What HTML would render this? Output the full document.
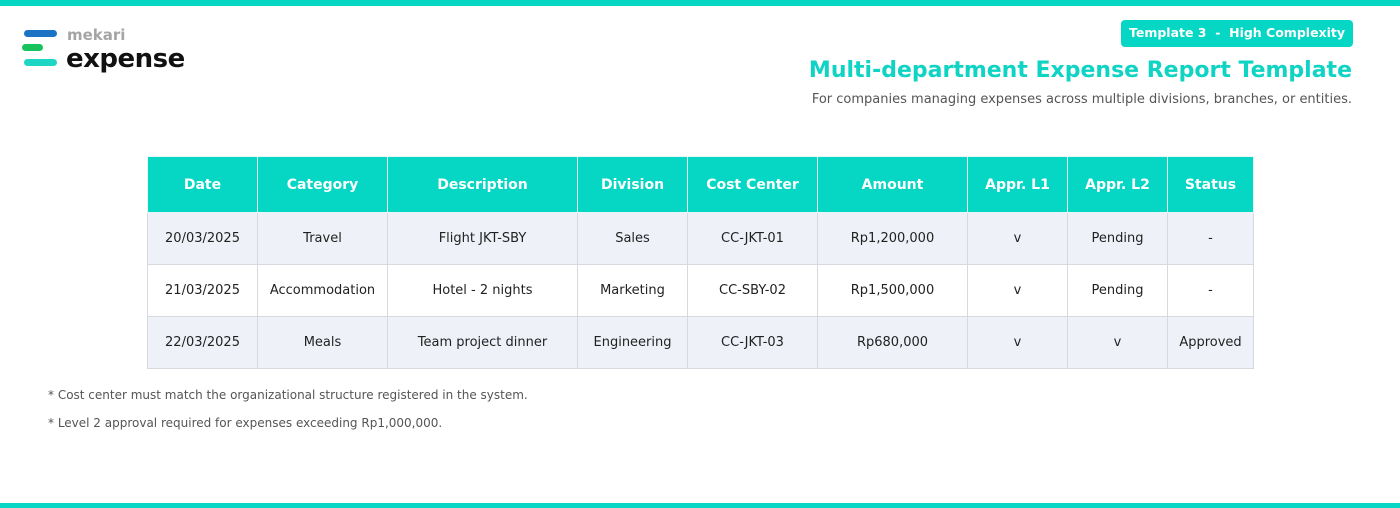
<!DOCTYPE html>
<html><head><style>
*{margin:0;padding:0;box-sizing:border-box}
body{width:1400px;height:508px;background:#fff;font-family:"DejaVu Sans","Liberation Sans",sans-serif;position:relative;overflow:hidden;color:#222}
.top{position:absolute;left:0;top:0;width:1400px;height:6px;background:#06d6c4}
.bot{position:absolute;left:0;top:503px;width:1400px;height:5px;background:#06d6c4}
.badge{position:absolute;left:1121px;top:20px;width:232px;height:27px;background:#06d6c4;border-radius:4px;color:#fff;font-weight:bold;font-size:12.5px;line-height:26px;text-align:center}
.title{position:absolute;right:48px;top:58px;font-size:22px;font-weight:bold;color:#0fd3c3;white-space:nowrap}
.sub{position:absolute;right:48px;top:92px;font-size:13px;color:#555;white-space:nowrap}
table{position:absolute;left:147px;top:156px;border-collapse:collapse;font-size:13px}
td,th{border:1px solid #d6d9de;text-align:center;padding:0}
th{background:#06d6c4;color:#fff;font-weight:bold;font-size:14px;height:56px;border-color:#e6f7f5}
td{height:52px;color:#222}
tr.a td{background:#eef2f8}
.note{position:absolute;left:48px;font-size:12px;color:#555}
</style></head><body>
<div class="top"></div>
<svg style="position:absolute;left:22px;top:28px" width="40" height="40">
<rect x="2" y="2" width="33" height="7" rx="3.5" fill="#1a73c4"/>
<rect x="0" y="16" width="21" height="7" rx="3.5" fill="#18c25c"/>
<rect x="2" y="31" width="33" height="7" rx="3.5" fill="#1ed6c4"/>
</svg>
<div style="position:absolute;left:67px;top:26px;font-size:15px;font-weight:bold;color:#a5a5a5">mekari</div>
<div style="position:absolute;left:66px;top:44px;font-size:26px;font-weight:bold;color:#111;letter-spacing:-0.5px">expense</div>
<div class="badge">Template 3 &nbsp;-&nbsp; High Complexity</div>
<div class="title">Multi-department Expense Report Template</div>
<div class="sub">For companies managing expenses across multiple divisions, branches, or entities.</div>
<table>
<tr><th style="width:110px">Date</th><th style="width:130px">Category</th><th style="width:190px">Description</th><th style="width:110px">Division</th><th style="width:130px">Cost Center</th><th style="width:150px">Amount</th><th style="width:100px">Appr. L1</th><th style="width:100px">Appr. L2</th><th style="width:86px">Status</th></tr>
<tr class="a"><td>20/03/2025</td><td>Travel</td><td>Flight JKT-SBY</td><td>Sales</td><td>CC-JKT-01</td><td>Rp1,200,000</td><td>v</td><td>Pending</td><td>-</td></tr>
<tr><td>21/03/2025</td><td>Accommodation</td><td>Hotel - 2 nights</td><td>Marketing</td><td>CC-SBY-02</td><td>Rp1,500,000</td><td>v</td><td>Pending</td><td>-</td></tr>
<tr class="a"><td>22/03/2025</td><td>Meals</td><td>Team project dinner</td><td>Engineering</td><td>CC-JKT-03</td><td>Rp680,000</td><td>v</td><td>v</td><td>Approved</td></tr>
</table>
<div class="note" style="top:388px">* Cost center must match the organizational structure registered in the system.</div>
<div class="note" style="top:416px">* Level 2 approval required for expenses exceeding Rp1,000,000.</div>
<div class="bot"></div>
</body></html>
